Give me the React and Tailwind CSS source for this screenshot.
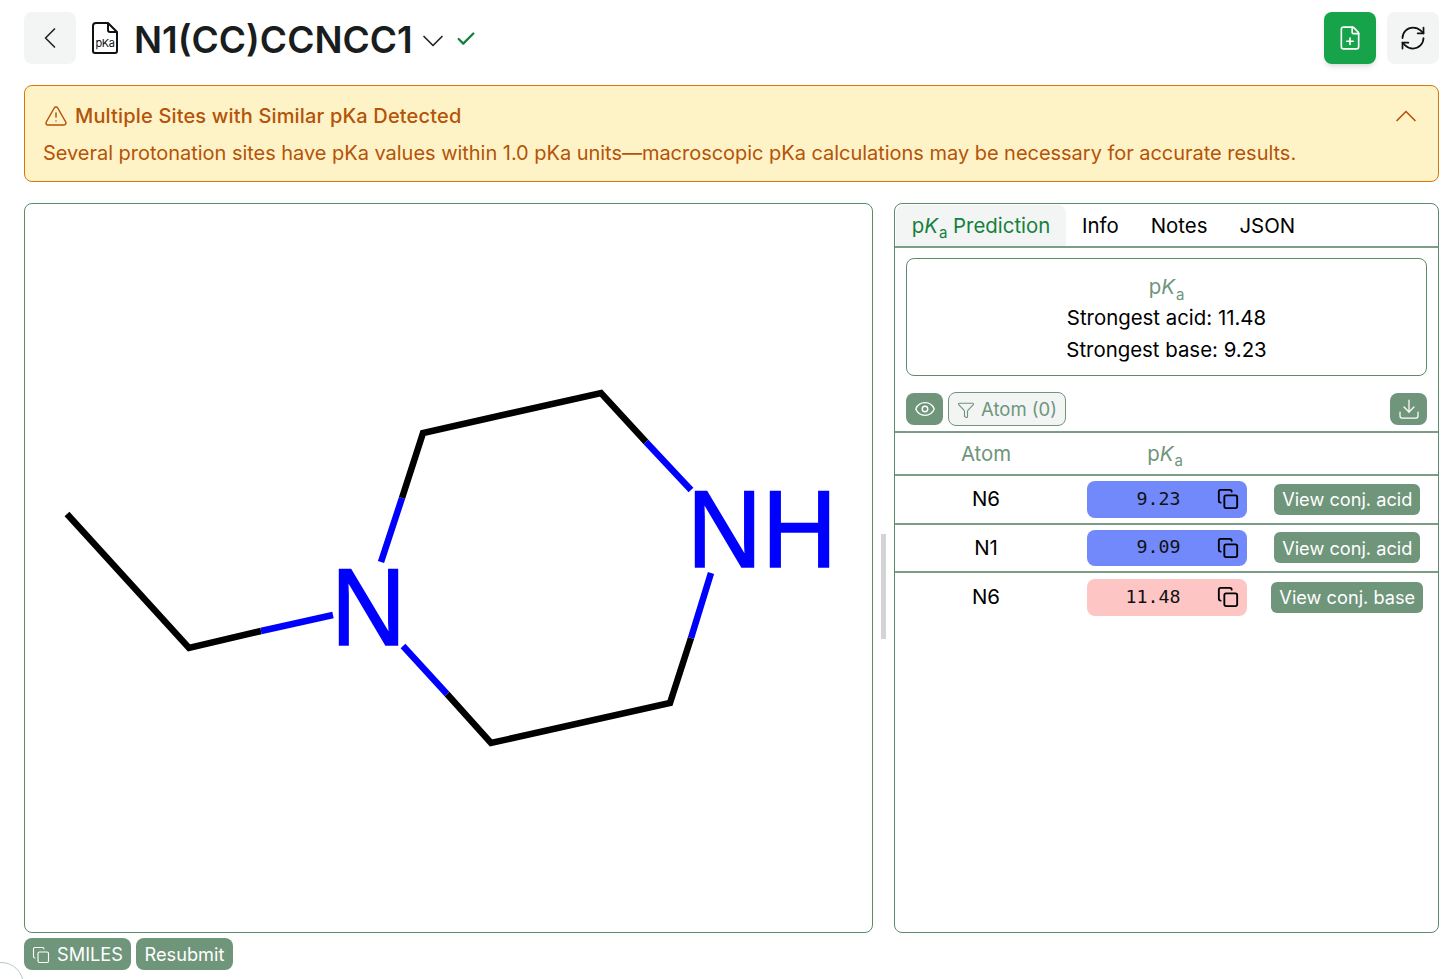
import { ChevronLeft, ChevronDown, ChevronUp, Check, FilePlus, RefreshCw, TriangleAlert, Eye, Funnel, Download, Copy } from "lucide-react";

const rows = [
  { atom: "N6", value: "9.23", color: "bg-[#7189fa]", action: "View conj. acid" },
  { atom: "N1", value: "9.09", color: "bg-[#7189fa]", action: "View conj. acid" },
  { atom: "N6", value: "11.48", color: "bg-[#fec5c5]", action: "View conj. base" },
];

function PKa() {
  return (
    <span>
      p<i>K</i>
      <sub className="text-[15px] align-[-2px] leading-none ml-px">a</sub>
    </span>
  );
}

function PkaFileIcon() {
  return (
    <svg width="28" height="34" viewBox="0 0 28 34" fill="none" className="shrink-0">
      <path d="M5 2h12l9 9v19a2 2 0 0 1-2 2H4a2 2 0 0 1-2-2V5a3 3 0 0 1 3-3z" stroke="#111" strokeWidth="2" strokeLinejoin="round" />
      <path d="M17 2v7a2 2 0 0 0 2 2h7" stroke="#111" strokeWidth="2" strokeLinejoin="round" />
      <text x="14" y="26" textAnchor="middle" fontSize="11" fontFamily="Inter, sans-serif" letterSpacing="-0.5" fill="#111">pKa</text>
    </svg>
  );
}

// skeletal drawing, coordinates are relative to the panel's inner box
function Molecule() {
  const blue = "M236 427 L308 411 M356 358 L377 294 M621 238 L666 286 M686 369 L666 434 M422 490 L378 442";
  return (
    <svg viewBox="0 0 847 728" className="w-full h-full">
      <g fill="none" strokeWidth="6.5">
        <path d="M42 310 L164 444 L236 427" stroke="#000" />
        <path d="M377 294 L398 229 L576 189 L621 238" stroke="#000" />
        <path d="M666 434 L645 499 L466 539 L422 490" stroke="#000" />
        <path d={blue} stroke="#0000ff" />
      </g>
      <text transform="translate(306 440.5) scale(0.97 1.02)" stroke="#0000ff" strokeWidth="1.5" fontSize="107" fontFamily="'Liberation Sans', sans-serif" fill="#0000ff">N</text>
      <text transform="translate(662 363) scale(0.97 1.02)" stroke="#0000ff" strokeWidth="1.5" fontSize="107" fontFamily="'Liberation Sans', sans-serif" fill="#0000ff">NH</text>
    </svg>
  );
}

export default function App() {
  return (
    <div className="relative h-screen overflow-hidden bg-white pl-6 pr-[17px] pt-3 flex flex-col font-['Inter',sans-serif] text-black">
      {/* Header */}
      <div className="flex items-center justify-between h-[52px] shrink-0">
        <div className="flex items-center">
          <button className="w-[52px] h-[52px] rounded-lg bg-[#f3f5f5] flex items-center justify-center">
            <ChevronLeft className="w-9 h-9 text-[#222]" strokeWidth={1.1} />
          </button>
          <span className="ml-[15px]"><PkaFileIcon /></span>
          <h1 className="ml-[15px] mt-[2px] text-[37px] font-semibold text-[#1a1d1d] leading-none">N1(CC)CCNCC1</h1>
          <ChevronDown className="ml-[2px] mt-[6px] w-9 h-9 text-[#222]" strokeWidth={1.1} />
          <Check className="ml-[4px] mt-[2px] w-[22px] h-[22px] text-[#15803d]" strokeWidth={2.5} />
        </div>
        <div className="flex items-center gap-[11px]">
          <button className="w-[52px] h-[52px] rounded-lg bg-[#16a34a] shadow-md flex items-center justify-center">
            <FilePlus className="w-[26px] h-[26px] text-white" strokeWidth={1.5} />
          </button>
          <button className="w-[52px] h-[52px] rounded-lg bg-[#f3f5f5] flex items-center justify-center">
            <RefreshCw className="w-7 h-7 text-[#111]" strokeWidth={1.5} />
          </button>
        </div>
      </div>

      {/* Alert */}
      <div className="mt-[21px] h-[97px] shrink-0 rounded-lg border border-[#d97706] bg-[#fef3c7] pl-[19px] pr-[14px] pt-[15px] text-[#b45309] text-[20px]">
        <div className="flex items-center justify-between h-[30px]">
          <div className="flex items-center gap-[7px]">
            <TriangleAlert className="w-6 h-6" strokeWidth={1.5} />
            <span className="font-medium tracking-[0.16px]">Multiple Sites with Similar pKa Detected</span>
          </div>
          <ChevronUp className="w-9 h-9" strokeWidth={1.1} />
        </div>
        <p className="mt-[7px] -ml-px leading-[30px] tracking-[-0.03px]">Several protonation sites have pKa values within 1.0 pKa units—macroscopic pKa calculations may be necessary for accurate results.</p>
      </div>

      {/* Panels */}
      <div className="mt-[21px] h-[730px] shrink-0 flex">
        <div className="w-[849px] rounded-lg border border-[#5c8a6c] overflow-hidden">
          <Molecule />
        </div>
        <div className="w-[21px] flex items-center justify-center pt-[36px]">
          <div className="w-[5px] h-[105px] bg-[#d4d4d4]" />
        </div>
        <div className="flex-1 rounded-lg border border-[#5c8a6c] flex flex-col overflow-hidden text-[20.4px]">
          <div className="flex h-[44px] shrink-0 border-b-2 border-[#7a9e86]">
            <div className="ml-px w-[170px] mt-px pt-px rounded-t-lg bg-[#f3f5f5] text-[#15803d] flex items-center justify-center whitespace-nowrap"><PKa />&nbsp;Prediction</div>
            <div className="ml-4">
              <span className="leading-[44px]">Info</span>
            </div>
            <div className="ml-8"><span className="leading-[44px]">Notes</span></div>
            <div className="ml-8"><span className="leading-[44px]">JSON</span></div>
          </div>

          <div className="mx-[11px] mt-[10px] h-[118px] shrink-0 rounded-lg border border-[#5c8a6c] flex flex-col items-center pt-[13px] leading-[32px]">
            <div className="text-[#6f957b] h-[30px] leading-[30px]"><PKa /></div>
            <div>Strongest acid: 11.48</div>
            <div>Strongest base: 9.23</div>
          </div>

          <div className="mx-[11px] mt-[16px] h-[34px] shrink-0 flex items-center">
            <button className="w-[37px] h-[32px] rounded-lg bg-[#6f957b] flex items-center justify-center">
              <Eye className="w-[22px] h-[22px] text-white" strokeWidth={1.5} />
            </button>
            <button className="ml-[5px] h-[34px] w-[118px] pt-px rounded-lg border border-[#6f957b] bg-[#f3f5f5] text-[#6f957b] text-[18.5px] flex items-center justify-center gap-[6px]">
              <Funnel className="w-[18px] h-[18px]" strokeWidth={1.5} />
              Atom (0)
            </button>
            <button className="ml-auto w-[37px] h-[32px] rounded-lg bg-[#6f957b] flex items-center justify-center">
              <Download className="w-6 h-6 text-white" strokeWidth={1.25} />
            </button>
          </div>

          <div className="mt-[5px] h-[45px] pt-px shrink-0 flex items-center border-t-2 border-b-2 border-[#7a9e86] text-[#6f957b]">
            <div className="w-[182px] text-center">Atom</div>
            <div className="w-[176px] text-center"><PKa /></div>
          </div>

          {rows.map((row, i) => (
            <div key={i} className={"h-[48.5px] shrink-0 flex items-center" + (i < 2 ? " border-b-2 border-[#7a9e86]" : "")}>
              <div className="w-[182px] text-center pt-px">{row.atom}</div>
              <div className={"ml-[10px] w-[159.5px] h-[36.5px] rounded-lg flex items-center justify-end pr-[8px] " + row.color}>
                <span className="font-['DejaVu_Sans_Mono',monospace] text-[18.3px] text-[#111] mr-[36px] -mt-[2px]">{row.value}</span>
                <Copy className="w-[22px] h-[22px] text-black" strokeWidth={2} />
              </div>
              <div className="ml-[10px] flex-1 flex justify-center">
                <button className="h-[31px] px-2 rounded-md bg-[#6f957b] text-white text-[18.2px] leading-none whitespace-nowrap">{row.action}</button>
              </div>
            </div>
          ))}
        </div>
      </div>

      {/* Footer actions */}
      <div className="mt-[5px] flex gap-[5px] text-white text-[18.2px]">
        <button className="h-[32px] w-[107px] rounded-lg bg-[#6f957b] flex items-center justify-center gap-[7px] pt-px">
          <Copy className="w-[18px] h-[18px]" strokeWidth={1.5} />
          SMILES
        </button>
        <button className="h-[32px] w-[97px] rounded-lg bg-[#6f957b] flex items-center justify-center pt-px">Resubmit</button>
      </div>

      {/* corner widget peeking in */}
      <div className="absolute left-[-22px] top-[962px] w-[46px] h-[46px] rounded-full border border-[#b5c9bb] bg-white" />
    </div>
  );
}
